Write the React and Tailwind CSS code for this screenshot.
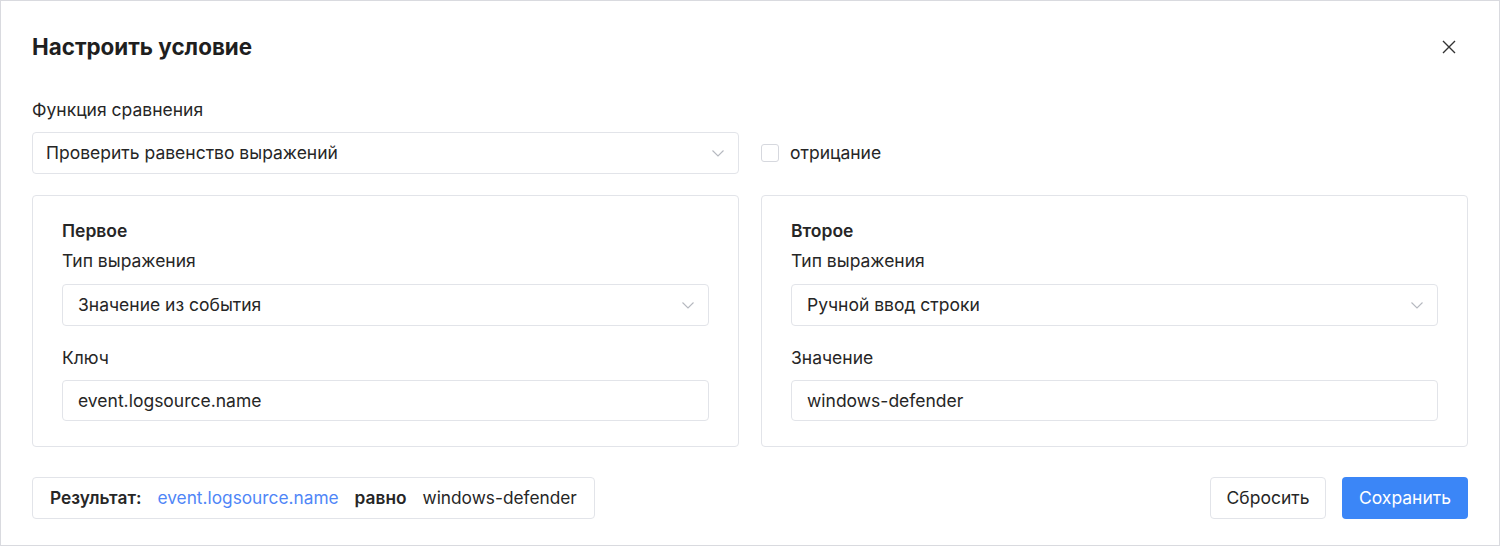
import React from 'react';

function Chevron() {
  return (
    <svg width="12" height="7" viewBox="0 0 12 7" fill="none" className="shrink-0">
      <path d="M0.5 0.5 L6 6 L11.5 0.5" stroke="#b5b8bf" strokeWidth="1.1" />
    </svg>
  );
}

function Select({value, pad}) {
  return (
    <div className={`flex items-center justify-between h-[42px] border border-[#e2e4e9] rounded bg-white ${pad}`}>
      <span className="text-[17.5px] text-[#262626]">{value}</span>
      <Chevron />
    </div>
  );
}

function Panel({title, type, label, value}) {
  return (
    <div className="border border-[#e2e4e9] rounded px-[29px] pt-[23px] pb-[25px]">
      {/* Heading */}
      <div className="text-[17.5px] font-semibold leading-6 text-[#262626]">{title}</div>
      <div className="mt-[6px] text-[17.5px] leading-6 text-[#262626]">Тип выражения</div>
      <div className="mt-[11px]">
        <Select value={type} pad="pl-[15px] pr-[14px] h-[41px]" />
      </div>
      <div className="mt-[20px] text-[17.5px] leading-6 text-[#262626]">{label}</div>
      <input
        readOnly
        value={value}
        className="mt-[10px] w-full h-[41px] px-[15px] border border-[#e2e4e9] rounded text-[17.5px] text-[#262626] focus:outline-none"
      />
    </div>
  );
}

export default function App() {
  return (
    <div className="h-[546px] w-[1500px] border border-[#d9dadf] bg-white px-[31px] pt-[32px] font-['Inter',sans-serif] text-[#262626]">
      {/* Header */}
      <div className="flex items-center justify-between">
        <h1 className="text-[22.4px] leading-[28px] font-bold text-[#1f1f1f]">Настроить условие</h1>
        <button className="mr-[12px] text-[#333]">
          <svg width="14" height="14" viewBox="0 0 14 14">
            <path d="M1 1 L13 13 M13 1 L1 13" stroke="#333" strokeWidth="1.4" />
          </svg>
        </button>
      </div>

      {/* Compare function */}
      <div className="mt-[37px] text-[17.5px] leading-6">Функция сравнения</div>
      <div className="mt-[10px] grid grid-cols-2 gap-[22px]">
        <Select value="Проверить равенство выражений" pad="pl-[13px] pr-[14px]" />
        <label className="flex items-center gap-[11px]">
          <span className="w-[18px] h-[18px] border border-[#d6d8de] rounded-[3px] bg-white" />
          <span className="text-[17.5px]">отрицание</span>
        </label>
      </div>

      {/* Panels */}
      <div className="mt-[21px] grid grid-cols-2 gap-[22px]">
        <Panel title="Первое" type="Значение из события" label="Ключ" value="event.logsource.name" />
        <Panel title="Второе" type="Ручной ввод строки" label="Значение" value="windows-defender" />
      </div>

      {/* Footer */}
      <div className="mt-[30px] flex items-center justify-between">
        <div className="flex items-center h-[42px] px-[17px] border border-[#e2e4e9] rounded text-[17.3px] gap-[16px]">
          <span className="font-semibold">Результат:</span>
          <span className="text-[#4f86f7]">event.logsource.name</span>
          <span className="font-semibold">равно</span>
          <span>windows-defender</span>
        </div>
        <div className="flex items-center gap-[16px]">
          <button className="h-[42px] w-[116px] border border-[#e2e4e9] rounded bg-white text-[17.5px] text-[#262626]">Сбросить</button>
          <button className="h-[42px] w-[126px] rounded bg-[#3b86f7] text-[17.5px] text-white">Сохранить</button>
        </div>
      </div>
    </div>
  );
}
